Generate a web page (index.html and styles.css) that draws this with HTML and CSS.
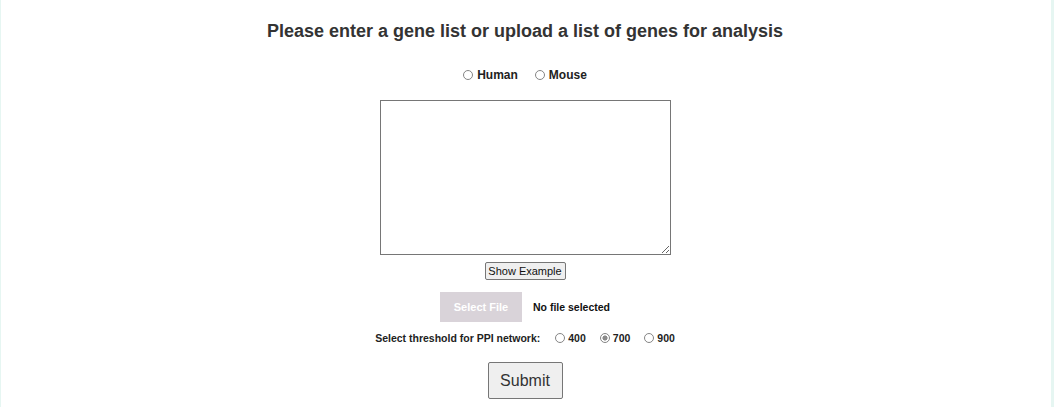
FILE: index.html
```html
<!DOCTYPE html>
<html>
<head>
<meta charset="utf-8">
<link rel="stylesheet" href="styles.css">
</head>
<body>
<div class="frame">
  <div class="page">
    <h2 class="title">Please enter a gene list or upload a list of genes for analysis</h2>
    <div class="species">
      <label class="opt"><input type="radio" name="sp"> Human</label>
      <label class="opt"><input type="radio" name="sp"> Mouse</label>
    </div>
    <textarea class="genes"></textarea>
    <button class="example">Show Example</button>
    <div class="file-row">
      <span class="select-file">Select File</span>
      <span class="nofile">No file selected</span>
    </div>
    <div class="threshold">
      <span class="th-label">Select threshold for PPI network:</span>
      <label class="th-opt"><input type="radio" name="th"> 400</label>
      <label class="th-opt"><input type="radio" name="th" checked> 700</label>
      <label class="th-opt"><input type="radio" name="th"> 900</label>
    </div>
    <button class="submit">Submit</button>
  </div>
</div>
</body>
</html>
```
FILE: styles.css
```css
html, body {
  margin: 0;
  padding: 0;
  background: #ffffff;
}
body {
  font-family: "Liberation Sans", Arial, sans-serif;
  color: #333333;
}
.frame {
  height: 407px;
  border-left: 1px solid #e6f6f2;
  border-right: 3px solid #e6f6f2;
  box-sizing: border-box;
  overflow: hidden;
}
.page {
  display: flex;
  flex-direction: column;
  align-items: center;
  padding-right: 2px;
}
.title {
  margin: 19px 0 0 0;
  font-size: 18px;
  font-weight: bold;
  line-height: 24px;
  color: #333333;
}
.species {
  margin-top: 24px;
  display: flex;
  gap: 17px;
  font-size: 12px;
  font-weight: bold;
  line-height: 16px;
  color: #222;
}
.opt, .th-opt {
  display: flex;
  align-items: center;
}
input[type="radio"] {
  appearance: none;
  -webkit-appearance: none;
  margin: 0 4px 0 0;
  width: 10px;
  height: 10px;
  border: 1px solid #858585;
  border-radius: 50%;
  background: #fff;
  box-sizing: border-box;
}
input[type="radio"]:checked {
  background: radial-gradient(circle, #8a8a8a 0 2.3px, #fff 2.8px);
}
.genes {
  margin-top: 17px;
  width: 291px;
  height: 155px;
  box-sizing: border-box;
  border: 1px solid #767676;
  resize: both;
}
.example {
  margin-top: 7px;
  font-family: "Liberation Sans", Arial, sans-serif;
  font-size: 11px;
  width: 81px;
  height: 18px;
  padding: 0;
  background: #efefef;
  border: 1px solid #767676;
  border-radius: 2px;
  color: #111;
}
.file-row {
  margin-top: 12px;
  display: flex;
  align-items: center;
  gap: 11px;
}
.select-file {
  width: 82px;
  height: 30px;
  background: #d9d3d9;
  color: #ffffff;
  font-size: 11px;
  font-weight: bold;
  display: flex;
  align-items: center;
  justify-content: center;
}
.nofile {
  font-size: 10.5px;
  font-weight: bold;
  color: #111;
}
.threshold {
  margin-top: 9px;
  display: flex;
  align-items: center;
  font-size: 10.5px;
  font-weight: bold;
  line-height: 14px;
  color: #222;
}
.th-label {
  margin-right: 15px;
}
.th-opt {
  margin-right: 14px;
}
.th-opt input {
  margin-right: 3px;
}
.th-opt:last-child {
  margin-right: 0;
}
.submit {
  margin-top: 17px;
  width: 75px;
  height: 37px;
  font-family: "Liberation Sans", Arial, sans-serif;
  font-size: 16px;
  background: #efefef;
  border: 1px solid #767676;
  border-radius: 2px;
  color: #333;
}
```
